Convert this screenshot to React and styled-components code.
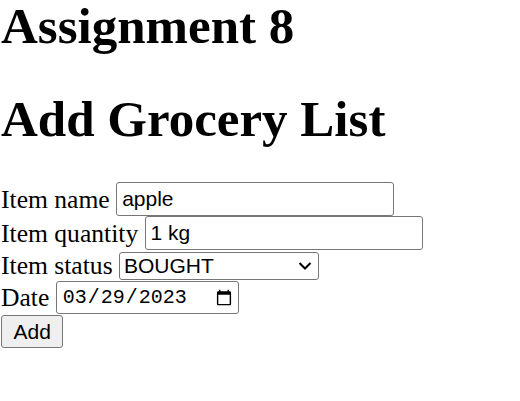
import React, { useState } from "react";
import styled, { createGlobalStyle } from "styled-components";

const GlobalStyle = createGlobalStyle`
  html, body {
    margin: 0;
    padding: 0;
    background: #ffffff;
  }
  body {
    font-family: "Liberation Serif", "Times New Roman", serif;
    color: #000000;
  }
`;

const Page = styled.div`
  padding-left: 1px;
`;

const Header = styled.header`
  display: flex;
  flex-direction: column;
  gap: 41px;
  margin-bottom: 37px;
`;

const Title = styled.h1`
  margin: 0;
  font-size: 51px;
  line-height: 52px;
  font-weight: 700;
`;

const Form = styled.form`
  display: flex;
  flex-direction: column;
  align-items: flex-start;
`;

const Row = styled.div`
  display: flex;
  align-items: center;
  gap: 6.4px;
  height: ${(p) => p.$height}px;
`;

const Label = styled.label`
  font-size: 25.6px;
  line-height: 29px;
  white-space: nowrap;
`;

const TextInput = styled.input`
  box-sizing: border-box;
  width: 278px;
  height: 34px;
  margin: 0;
  padding: 0 5px;
  border: 1px solid #767676;
  border-radius: 3px;
  font-family: "Liberation Sans", Arial, sans-serif;
  font-size: 21px;
  color: #000000;
  background: #ffffff;
  outline: none;
`;

const SelectWrap = styled.div`
  position: relative;
  display: inline-flex;
`;

const Select = styled.select`
  box-sizing: border-box;
  appearance: none;
  width: 200px;
  height: 28px;
  margin: 0;
  padding: 0 24px 0 4px;
  border: 1px solid #767676;
  border-radius: 3px;
  font-family: "Liberation Sans", Arial, sans-serif;
  font-size: 21px;
  line-height: 26px;
  color: #000000;
  background: #ffffff;
  outline: none;
`;

const Chevron = styled.svg`
  position: absolute;
  right: 7px;
  top: 50%;
  width: 14px;
  height: 14px;
  transform: translateY(-50%);
  pointer-events: none;
`;

const DateInput = styled.input`
  box-sizing: border-box;
  width: 183px;
  height: 33px;
  margin: 0;
  padding: 0 5px;
  border: 1px solid #767676;
  border-radius: 3px;
  font-family: "Liberation Mono", "DejaVu Sans Mono", monospace;
  font-size: 20px;
  color: #000000;
  background: #ffffff;
  outline: none;

  &::-webkit-calendar-picker-indicator {
    width: 18px;
    height: 18px;
    margin-right: 0;
    padding: 0;
  }
`;

const Button = styled.button`
  box-sizing: border-box;
  height: 33px;
  margin-top: 1px;
  padding: 0 11.5px;
  border: 1px solid #767676;
  border-radius: 3px;
  background: #efefef;
  font-family: "Liberation Sans", Arial, sans-serif;
  font-size: 21px;
  color: #000000;
`;

export default function App() {
  const [form, setForm] = useState({
    name: "apple",
    quantity: "1 kg",
    status: "BOUGHT",
    date: "2023-03-29",
  });

  const update = (key) => (e) =>
    setForm((prev) => ({ ...prev, [key]: e.target.value }));

  return (
    <>
      <GlobalStyle />
      <Page>
        <Header>
          <Title>Assignment 8</Title>
          <Title>Add Grocery List</Title>
        </Header>

        <Form onSubmit={(e) => e.preventDefault()}>
          <Row $height={34}>
            <Label htmlFor="name">Item name</Label>
            <TextInput id="name" value={form.name} onChange={update("name")} />
          </Row>

          <Row $height={34}>
            <Label htmlFor="quantity">Item quantity</Label>
            <TextInput
              id="quantity"
              value={form.quantity}
              onChange={update("quantity")}
            />
          </Row>

          <Row $height={31}>
            <Label htmlFor="status">Item status</Label>
            <SelectWrap>
              <Select
                id="status"
                value={form.status}
                onChange={update("status")}
              >
                <option value="BOUGHT">BOUGHT</option>
                <option value="NOT BOUGHT">NOT BOUGHT</option>
              </Select>
              <Chevron viewBox="0 0 14 14">
                <polyline
                  points="1.5,4 7,9.5 12.5,4"
                  fill="none"
                  stroke="#000"
                  strokeWidth="2"
                />
              </Chevron>
            </SelectWrap>
          </Row>

          <Row $height={33}>
            <Label htmlFor="date">Date</Label>
            <DateInput
              id="date"
              type="date"
              value={form.date}
              onChange={update("date")}
            />
          </Row>

          <Button type="submit">Add</Button>
        </Form>
      </Page>
    </>
  );
}
